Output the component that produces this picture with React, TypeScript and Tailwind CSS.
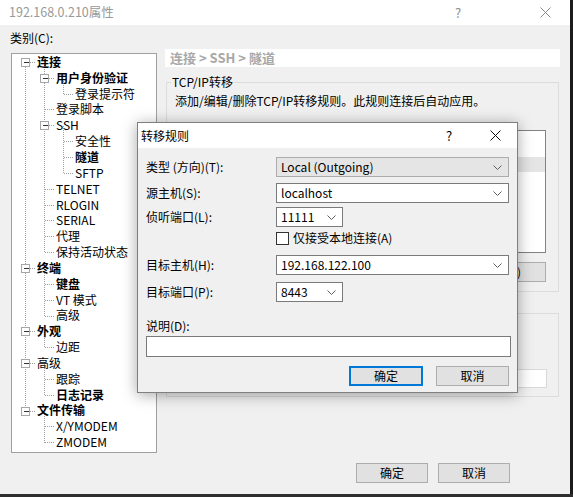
const ROW = 15.85;

type Node = { t: string; l: number; box?: boolean; b?: boolean };

const tree: Node[] = [
  { t: "连接", l: 0, box: true, b: true },
  { t: "用户身份验证", l: 1, box: true, b: true },
  { t: "登录提示符", l: 2 },
  { t: "登录脚本", l: 1 },
  { t: "SSH", l: 1, box: true },
  { t: "安全性", l: 2 },
  { t: "隧道", l: 2, b: true },
  { t: "SFTP", l: 2 },
  { t: "TELNET", l: 1 },
  { t: "RLOGIN", l: 1 },
  { t: "SERIAL", l: 1 },
  { t: "代理", l: 1 },
  { t: "保持活动状态", l: 1 },
  { t: "终端", l: 0, box: true, b: true },
  { t: "键盘", l: 1, b: true },
  { t: "VT 模式", l: 1 },
  { t: "高级", l: 1 },
  { t: "外观", l: 0, box: true, b: true },
  { t: "边距", l: 1 },
  { t: "高级", l: 0, box: true },
  { t: "跟踪", l: 1 },
  { t: "日志记录", l: 1, b: true },
  { t: "文件传输", l: 0, box: true, b: true },
  { t: "X/YMODEM", l: 1 },
  { t: "ZMODEM", l: 1 },
];

const indent = ["pl-[25px]", "pl-[44px]", "pl-[63px]"];

const cy = (i: number) => Math.round(ROW * i + ROW / 2) + 0.5;
const cx = (l: number) => 13 + 19 * l + 0.5;

function TreeLines() {
  const lines: { x1: number; y1: number; x2: number; y2: number }[] = [];
  const roots = tree.map((n, i) => (n.l === 0 ? i : -1)).filter((i) => i >= 0);
  lines.push({ x1: cx(0), y1: cy(roots[0]), x2: cx(0), y2: cy(roots[roots.length - 1]) });
  tree.forEach((n, i) => {
    if (n.box) {
      let last = -1;
      for (let j = i + 1; j < tree.length && tree[j].l > n.l; j++) {
        if (tree[j].l === n.l + 1) last = j;
      }
      if (last > 0) lines.push({ x1: cx(n.l + 1), y1: cy(i), x2: cx(n.l + 1), y2: cy(last) });
    }
    lines.push({ x1: cx(n.l), y1: cy(i), x2: 23 + 19 * n.l, y2: cy(i) });
  });
  return (
    <svg className="absolute left-0 top-0" width="144" height="398" shapeRendering="crispEdges">
      {lines.map((s, k) => (
        <line key={k} {...s} stroke="#a0a0a0" strokeWidth="1" strokeDasharray="1 1" />
      ))}
      {tree.map((n, i) =>
        n.box ? (
          <g key={"b" + i}>
            <rect x={cx(n.l) - 4} y={cy(i) - 4} width="8" height="8" fill="#fdfdfd" stroke="#a6a6a6" />
            <line x1={cx(n.l) - 2} y1={cy(i)} x2={cx(n.l) + 3} y2={cy(i)} stroke="#333" />
          </g>
        ) : null
      )}
    </svg>
  );
}

const Chevron = () => (
  <svg width="9" height="5" viewBox="0 0 9 5" className="shrink-0">
    <polyline points="0.5,0.5 4.5,4.5 8.5,0.5" fill="none" stroke="#606060" strokeWidth="1" />
  </svg>
);

const CloseX = ({ color }: { color: string }) => (
  <svg width="11" height="11" viewBox="0 0 11 11">
    <path d="M0.5 0.5 L10.5 10.5 M10.5 0.5 L0.5 10.5" stroke={color} strokeWidth="1" />
  </svg>
);

function Combo({ value, wide, gray }: { value: string; wide?: boolean; gray?: boolean }) {
  return (
    <div
      className={`h-[20px] flex items-center pl-[4px] pr-[6px] border ${wide ? "w-[233px]" : "w-[67px]"} ${
        gray ? "bg-[#e5e5e5] border-[#acacac]" : "bg-white border-[#7a7a7a]"
      }`}
    >
      <span className="flex-1 whitespace-nowrap leading-none">{value}</span>
      <Chevron />
    </div>
  );
}

const Btn = ({ label, w, primary }: { label?: string; w: string; primary?: boolean }) => (
  <div
    className={`${w} h-[20px] flex items-center justify-center bg-[#e1e1e1] ${
      primary ? "border-2 border-[#0078d7]" : "border border-[#adadad]"
    }`}
  >
    {label}
  </div>
);

export default function App() {
  return (
    <div className="relative w-[573px] h-[497px] overflow-hidden bg-[#f0f0f0] text-[12px] text-black [font-family:'Noto_Sans_CJK_SC','Noto_Sans',sans-serif]">
      <div className="flex h-[494px]">
        <div className="w-[570px] flex flex-col">
          {/* title bar */}
          <div className="h-[25px] bg-white flex items-center">
            <span className="pl-[9px] text-[#999999] text-[12.5px]">192.168.0.210属性</span>
            <span className="ml-auto w-[20px] text-center text-[#8a8a8a] text-[13px]">?</span>
            <span className="ml-[67px] mr-[15px] w-[20px] flex justify-center">
              <CloseX color="#8a8a8a" />
            </span>
          </div>

          <div className="pl-[10px] mt-[5px] leading-[16px]">类别(C):</div>

          <div className="flex items-start mt-[3px] pl-[11px]">
            {/* category tree */}
            <div className="mt-[4px] w-[146px] h-[400px] shrink-0 border border-[#a0a0a0] bg-white relative">
              <TreeLines />
              <div className="relative">
                {tree.map((n, i) => (
                  <div
                    key={i}
                    className={`h-[15.85px] flex items-center whitespace-nowrap ${indent[n.l]} ${n.b ? "font-bold" : ""}`}
                  >
                    {n.t}
                  </div>
                ))}
              </div>
            </div>

            {/* right panel */}
            <div className="ml-[8px] w-[395px] flex flex-col">
              <div className="h-[18px] bg-white pl-[5px] flex items-center text-[13px] font-bold text-[#a8a8a8]">
                连接 &gt; SSH &gt; 隧道
              </div>

              <fieldset className="mt-[7px] ml-[1px] w-[393px] border border-[#dcdcdc]">
                <legend className="ml-[4px] px-[1px] leading-[16px]">TCP/IP转移</legend>
                <div className="pl-[8px] pr-[12px] pb-[9px]">
                  <div className="mt-[3px] leading-[16px]">添加/编辑/删除TCP/IP转移规则。此规则连接后自动应用。</div>
                  <div className="mt-[21px] h-[123px] border border-[#828282] bg-white">
                    <div className="mt-[26px] h-[15px] bg-[#e5e5e5]" />
                  </div>
                  <div className="mt-[9px] flex justify-end gap-[8px]">
                    <Btn w="w-[90px]" />
                    <Btn w="w-[90px]" />
                    <Btn label="删除(D)" w="w-[90px]" />
                  </div>
                </div>
              </fieldset>

              <fieldset className="mt-[13px] ml-[1px] w-[393px] border border-[#dcdcdc]">
                <legend className="ml-[4px] px-[1px] leading-[16px]">X11转发</legend>
                <div className="pl-[8px] pr-[11px] pb-[8px]">
                  <div className="mt-[48px] h-[19px] border border-[#d9d9d9] bg-white" />
                </div>
              </fieldset>
            </div>
          </div>

          <div className="mt-[10px] flex justify-end gap-[10px] pr-[60px]">
            <Btn label="确定" w="w-[72px]" />
            <Btn label="取消" w="w-[72px]" />
          </div>
        </div>
        <div className="w-[3px] bg-[#1c1c1c]" />
      </div>
      <div className="h-[3px] bg-[#2e2e2e]" />

      {/* forwarding rule dialog */}
      <div className="absolute left-[137px] top-[122px] w-[381px] h-[271px] border border-[#7f7f7f] bg-[#f0f0f0] shadow-[0_2px_14px_rgba(0,0,0,0.35)] flex flex-col">
        <div className="h-[25px] bg-white flex items-center pl-[3px]">
          <span>转移规则</span>
          <span className="ml-auto w-[20px] text-center text-[13px]">?</span>
          <span className="ml-[26px] mr-[12px] w-[20px] flex justify-center">
            <CloseX color="#111" />
          </span>
        </div>
        <div className="pl-[8px] flex flex-col">
          <div className="mt-[9px] flex items-center">
            <span className="w-[130px]">类型 (方向)(T):</span>
            <Combo value="Local (Outgoing)" wide gray />
          </div>
          <div className="mt-[6px] flex items-center">
            <span className="w-[130px]">源主机(S):</span>
            <Combo value="localhost" wide />
          </div>
          <div className="mt-[4px] flex items-center">
            <span className="w-[130px]">侦听端口(L):</span>
            <Combo value="11111" />
          </div>
          <div className="mt-[4px] h-[14px] flex items-center pl-[130px]">
            <span className="w-[13px] h-[13px] border border-[#333] bg-white" />
            <span className="ml-[4px]">仅接受本地连接(A)</span>
          </div>
          <div className="mt-[10px] flex items-center">
            <span className="w-[130px]">目标主机(H):</span>
            <Combo value="192.168.122.100" wide />
          </div>
          <div className="mt-[7px] flex items-center">
            <span className="w-[130px]">目标端口(P):</span>
            <Combo value="8443" />
          </div>
          <div className="mt-[16px] leading-[16px]">说明(D):</div>
          <div className="mt-[2px] w-[365px] h-[21px] border border-[#7a7a7a] bg-white" />
          <div className="mt-[9px] flex justify-end gap-[13px] pr-[8px]">
            <Btn label="确定" w="w-[74px]" primary />
            <Btn label="取消" w="w-[73px]" />
          </div>
        </div>
      </div>
    </div>
  );
}
